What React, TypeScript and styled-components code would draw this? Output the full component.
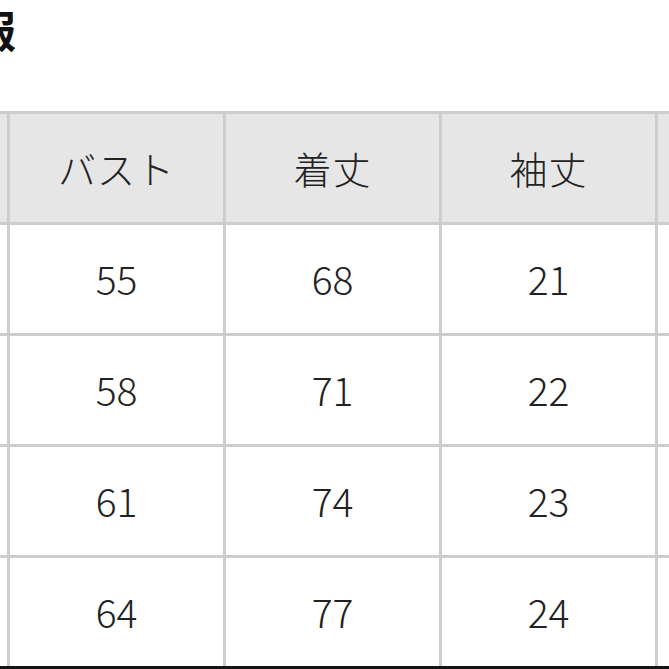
import React from 'react';
import styled, {createGlobalStyle} from 'styled-components';

const GlobalStyle = createGlobalStyle`
  html, body {
    margin: 0;
    padding: 0;
    background: #ffffff;
    overflow: hidden;
  }
  body {
    font-family: "Noto Sans CJK JP", "Noto Sans", sans-serif;
    color: #1e1e1e;
  }
`;

const Page = styled.div`
  width: 669px;
  height: 669px;
  overflow: hidden;
`;

const Heading = styled.h2`
  margin: 0 0 0 -28px;
  height: 111px;
  padding-top: 7px;
  box-sizing: border-box;
  font-size: 44px;
  line-height: 44px;
  font-weight: 700;
  color: #111;
`;

const Grid = styled.div`
  display: grid;
  grid-template-columns: repeat(5, 213px);
  grid-auto-rows: 108px;
  gap: 3px;
  padding-top: 3px;
  margin-left: -206px;
  width: max-content;
  background: #cdcdcd;
  border-bottom: 3px solid #141414;
`;

const Cell = styled.div<{ $head?: boolean }>`
  display: flex;
  align-items: center;
  justify-content: center;
  background: ${({$head}) => ($head ? '#e6e6e6' : '#ffffff')};
  font-size: ${({$head}) => ($head ? '38px' : '39px')};
  font-weight: 300;
  color: #222;
  letter-spacing: ${({$head}) => ($head ? '1px' : '0')};
  padding-bottom: 2px;
  box-sizing: border-box;
`;

const headers = ['', 'バスト', '着丈', '袖丈', ''];
const rows = [
    ['55', '68', '21'],
    ['58', '71', '22'],
    ['61', '74', '23'],
    ['64', '77', '24'],
];

function App() {
    return (<>
        <GlobalStyle/>
        <Page>
            <Heading>報</Heading>
            <Grid>
                {headers.map((h, i) => <Cell $head key={'h' + i}>{h}</Cell>)}
                {rows.map((r, ri) => (
                    <React.Fragment key={ri}>
                        <Cell/>
                        {r.map((v, ci) => <Cell key={ci}>{v}</Cell>)}
                        <Cell/>
                    </React.Fragment>
                ))}
            </Grid>
        </Page>
    </>);
}

export default App;
